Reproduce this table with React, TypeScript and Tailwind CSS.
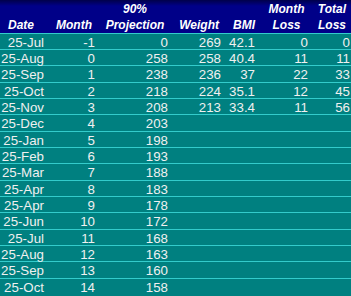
const rows: (string | number)[][] = [
  ["25-Jul", -1, 0, 269, 42.1, 0, 0],
  ["25-Aug", 0, 258, 258, 40.4, 11, 11],
  ["25-Sep", 1, 238, 236, 37, 22, 33],
  ["25-Oct", 2, 218, 224, 35.1, 12, 45],
  ["25-Nov", 3, 208, 213, 33.4, 11, 56],
  ["25-Dec", 4, 203],
  ["25-Jan", 5, 198],
  ["25-Feb", 6, 193],
  ["25-Mar", 7, 188],
  ["25-Apr", 8, 183],
  ["25-Apr", 9, 178],
  ["25-Jun", 10, 172],
  ["25-Jul", 11, 168],
  ["25-Aug", 12, 163],
  ["25-Sep", 13, 160],
  ["25-Oct", 14, 158],
];

const pads = ["pr-[4px]", "pr-[2px]", "pr-[2px]", "pr-[2px]", "pr-[3px]", "pr-[2px]", "pr-[1px]"];

export default function App() {
  return (
    <div className="w-[351px] h-[296px] overflow-hidden bg-[#008080] font-['Liberation_Sans',Arial,sans-serif]">
      <div className="grid grid-cols-[48px_49px_73px_53px_35px_52px_41px] h-[32.5px] bg-[linear-gradient(to_bottom,#00004a,#000088_6px)] text-white font-bold italic text-[12px] leading-[16px] pt-[1px]">
        <div className="flex items-end pl-[8px]">Date</div>
        <div className="flex items-end justify-end pr-[5px]">Month</div>
        <div className="flex flex-col justify-end items-center pl-[3px]">
          <span>90%</span>
          <span>Projection</span>
        </div>
        <div className="flex items-end justify-end pr-[4px]">Weight</div>
        <div className="flex items-end justify-end pr-[3px]">BMI</div>
        <div className="flex flex-col justify-end items-center pl-[5px]">
          <span>Month</span>
          <span>Loss</span>
        </div>
        <div className="flex flex-col justify-end items-end pr-[5px]">
          <span>Total</span>
          <span>Loss</span>
        </div>
      </div>
      {rows.map((r, i) => (
        <div
          key={i}
          className="grid grid-cols-[48px_49px_73px_53px_35px_52px_41px] h-[16.35px] border-t border-[#33cccc] text-[#f0f0f0] text-[13.3px] leading-[12px]"
        >
          {pads.map((p, j) => (
            <div key={j} className={`text-right pt-[3px] whitespace-nowrap ${p}`}>
              {r[j] !== undefined ? r[j] : ""}
            </div>
          ))}
        </div>
      ))}
    </div>
  );
}
